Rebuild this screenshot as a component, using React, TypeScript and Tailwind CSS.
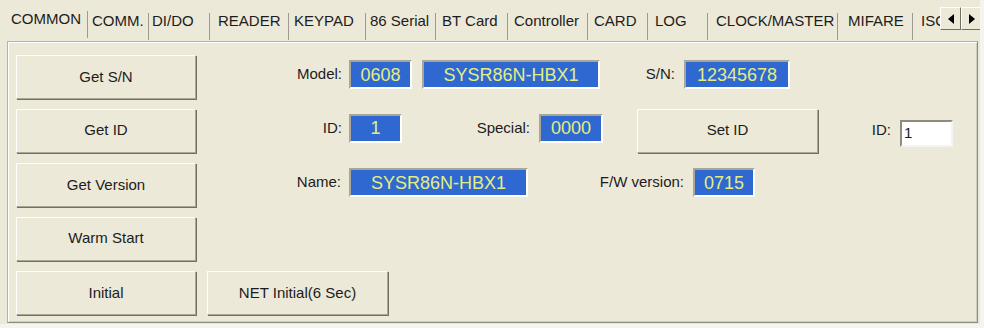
import type { ReactNode } from "react";

const TABS: { label: string; w: number; pl: number }[] = [
  { label: "COMMON", w: 81, pl: 4 },
  { label: "COMM.", w: 61, pl: 4 },
  { label: "DI/DO", w: 61, pl: 3 },
  { label: "READER", w: 79, pl: 8 },
  { label: "KEYPAD", w: 77, pl: 5 },
  { label: "86 Serial", w: 70, pl: 4 },
  { label: "BT Card", w: 72, pl: 6 },
  { label: "Controller", w: 80, pl: 6 },
  { label: "CARD", w: 60, pl: 6 },
  { label: "LOG", w: 60, pl: 7 },
  { label: "CLOCK/MASTER", w: 130, pl: 8 },
  { label: "MIFARE", w: 75, pl: 10 },
  { label: "ISO", w: 60, pl: 8 },
];

function Button({ children, w = "w-[180px]" }: { children: ReactNode; w?: string }) {
  return (
    <div
      className={`${w} h-[44px] shrink-0 flex items-center justify-center bg-[#ECE9D8] border border-t-white border-l-white border-r-[#a9a797] border-b-[#a9a797] shadow-[1px_1px_0_#716f64] text-[15px] text-[#1c1c1c]`}
    >
      {children}
    </div>
  );
}

function Value({ children, w }: { children: ReactNode; w: string }) {
  return (
    <div
      className={`${w} h-[29px] shrink-0 flex items-center justify-center bg-[#2f68d0] border-2 border-t-[#a8a698] border-l-[#a8a698] border-b-white border-r-white text-[18px] leading-none text-[#e4ee80]`}
    >
      {children}
    </div>
  );
}

function Label({ children, w }: { children: ReactNode; w: string }) {
  return <div className={`${w} shrink-0 text-right text-[15px] text-[#1c1c1c]`}>{children}</div>;
}

function Arrow({ dir }: { dir: "left" | "right" }) {
  return (
    <div className="w-[21px] h-[23px] flex items-center justify-center bg-[#ECE9D8] border border-t-white border-l-white border-r-[#716f64] border-b-[#716f64]">
      <svg width="6" height="10" viewBox="0 0 6 10">
        {dir === "left" ? <path d="M6 0 L0 5 L6 10 Z" fill="#000" /> : <path d="M0 0 L6 5 L0 10 Z" fill="#000" />}
      </svg>
    </div>
  );
}

export default function App() {
  return (
    <div className="w-[984px] h-[328px] bg-[#f5f4ef] overflow-hidden" style={{ fontFamily: '"Liberation Sans", Arial, sans-serif' }}>
      <div className="w-[980px] h-[324px] bg-[#ECE9D8] flex flex-col">
        {/* tab strip */}
        <div className="relative h-[41px] shrink-0 pl-[7px] overflow-hidden">
          <div className="flex w-[933px] overflow-hidden">
            {TABS.map((t, i) => (
              <div
                key={t.label}
                style={{ width: t.w, paddingLeft: t.pl }}
                className={`shrink-0 h-[41px] flex ${i === 0 ? "pt-[11px]" : "pt-[13px]"}`}
              >
                <div className="flex-1 h-[27px] border-r border-[#9d9b8f] text-[15px] leading-[16px] text-[#1c1c1c] whitespace-nowrap">
                  {t.label}
                </div>
              </div>
            ))}
          </div>
          <div className="absolute left-[940px] top-[7px] flex">
            <Arrow dir="left" />
            <Arrow dir="right" />
          </div>
        </div>

        {/* panel */}
        <div className="ml-[7px] w-[971px] h-[282px] border border-t-[#b5b3a6] border-l-[#b5b3a6] border-r-[#8e8c80] border-b-[#8e8c80] shadow-[inset_1px_1px_0_#fff,inset_-1px_-1px_0_#cfcdc0] pl-[8px] pt-[13px] flex flex-col">
          <div className="flex items-center h-[44px]">
            <Button>Get S/N</Button>
            <div className="flex items-center -mt-[5px]">
              <Label w="w-[146px]">Model:</Label>
              <div className="ml-[7px]"><Value w="w-[63px]">0608</Value></div>
              <div className="ml-[10px]"><Value w="w-[178px]">SYSR86N-HBX1</Value></div>
              <Label w="w-[75px]">S/N:</Label>
              <div className="ml-[9px]"><Value w="w-[106px]">12345678</Value></div>
            </div>
          </div>

          <div className="flex items-center h-[45px] mt-[9px]">
            <Button>Get ID</Button>
            <div className="flex items-center -mt-[5px]">
              <Label w="w-[146px]">ID:</Label>
              <div className="ml-[7px]"><Value w="w-[53px]">1</Value></div>
              <Label w="w-[128px]">Special:</Label>
              <div className="ml-[9px]"><Value w="w-[64px]">0000</Value></div>
            </div>
            <div className="ml-[34px] flex items-center">
              <Button w="w-[181px]">Set ID</Button>
              <Label w="w-[73px]">ID:</Label>
              <div className="ml-[9px] mt-[5px] w-[53px] h-[27px] bg-white border-2 border-t-[#8e8c80] border-l-[#8e8c80] border-b-[#f4f3ee] border-r-[#f4f3ee] flex items-center pl-[2px] text-[15px] text-[#1c1c1c]">
                1
              </div>
            </div>
          </div>

          <div className="flex items-center h-[44px] mt-[10px]">
            <Button>Get Version</Button>
            <div className="flex items-center -mt-[5px]">
              <Label w="w-[145px]">Name:</Label>
              <div className="ml-[8px]"><Value w="w-[179px]">SYSR86N-HBX1</Value></div>
              <Label w="w-[156px]">F/W version:</Label>
              <div className="ml-[9px]"><Value w="w-[62px]">0715</Value></div>
            </div>
          </div>

          <div className="flex items-center h-[45px] mt-[9px]">
            <Button>Warm Start</Button>
          </div>

          <div className="flex items-center gap-[11px] h-[44px] mt-[10px]">
            <Button>Initial</Button>
            <Button w="w-[181px]">NET Initial(6 Sec)</Button>
          </div>
        </div>
      </div>
    </div>
  );
}
